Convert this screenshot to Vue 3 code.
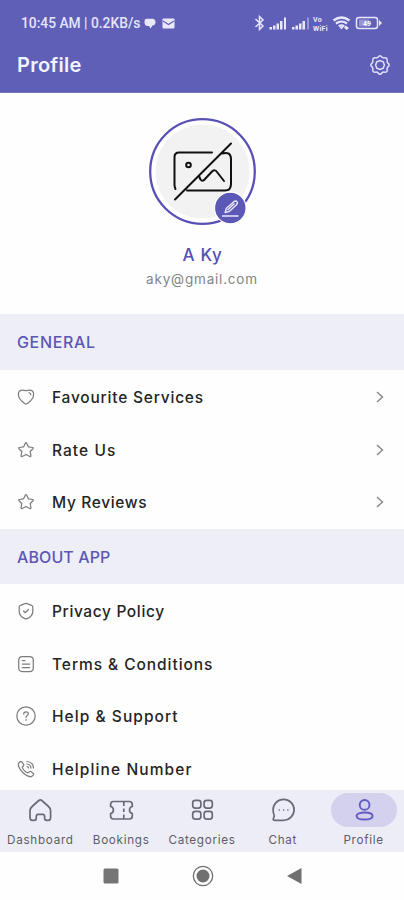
<script setup>
const general = [
  { label: 'Favourite Services', icon: 'heart', tracking: 0.79 },
  { label: 'Rate Us', icon: 'star', tracking: 1.05 },
  { label: 'My Reviews', icon: 'star', tracking: 0.65 },
]
const about = [
  { label: 'Privacy Policy', icon: 'shield', tracking: 0.63 },
  { label: 'Terms & Conditions', icon: 'doc', tracking: 0.94 },
  { label: 'Help & Support', icon: 'help', tracking: 1.05 },
  { label: 'Helpline Number', icon: 'phone', tracking: 1.1 },
]
const sections = [
  { title: 'GENERAL', rows: general, arrows: true },
  { title: 'ABOUT APP', rows: about, arrows: false },
]
const icons = {
  heart: 'M6.500 3C8 3 9 3.300 10 3.800C11 3.300 12 3 13.500 3C16.500 3 17.600 5 17.600 7.400C17.600 11.300 13.700 14.800 11 16.700Q10 17.400 9 16.700C6.300 14.800 2.400 11.300 2.400 7.400C2.400 5 3.500 3 6.500 3ZM13 5.800Q14.700 5.900 14.800 7.600',
  star: 'M9.300 3.200Q10 2.100 10.700 3.200L12.500 6.900L16.700 7.500Q17.800 7.800 17 8.700L14.200 11.500L14.900 15.700Q14.900 17 13.800 16.500L10 14.500L6.200 16.500Q5.100 17 5.100 15.700L5.800 11.500L3 8.700Q2.200 7.800 3.300 7.500L7.500 6.900Z',
  shield: 'M8.900 2.600Q10 2.100 11.100 2.600L15.500 4.300Q16.800 4.900 16.800 6.300V10.300C16.800 13.500 14 16.400 11.200 17.600Q10 18.100 8.800 17.600C6 16.400 3.200 13.500 3.200 10.300V6.300Q3.200 4.900 4.500 4.300ZM7.600 10L9.300 11.700L12.500 8.500',
  doc: 'M6.500 2.500H13.500Q17.300 2.500 17.300 6.300V13.700Q17.300 17.500 13.500 17.500H6.500Q2.700 17.500 2.700 13.700V6.300Q2.700 2.500 6.500 2.500ZM6.300 6.500H9M6.300 10H13.700M6.300 13.500H13.700',
  help: 'M10 .8A9.200 9.200 0 1 1 10 19.200A9.200 9.200 0 1 1 10 .8ZM7.700 8Q7.700 5.800 10 5.800Q12.300 5.800 12.300 7.900C12.300 9.600 10 9.500 10 11.500M10 13.700V14.300',
  phone: 'M5.600 2.700Q4.900 2 4.100 2.700L2.700 4.100C1.500 6 3.500 10.200 6.500 13.300S13.800 18.400 15.900 17.400L17.400 15.900Q18.100 15.100 17.300 14.400L14.800 12.500Q14 12 13.300 12.700L12 13.900C9.800 13.200 7 10.300 6.200 8.100L7.500 6.700Q8.100 6 7.500 5.200ZM11 5Q14.500 5.400 15 9M11 2.500Q17 3 17.500 9M11.200 7.700Q12.200 7.900 12.400 9',
}
const tabs = [
  { label: 'Dashboard', path: 'M4.300 8.500L10.500 3Q12 1.800 13.500 3L19.700 8.500Q22.300 10.800 22.300 13V20Q22.300 22.800 20 22.800H18.500Q16.300 22.800 16.300 20.800V19Q16.300 16.800 14.500 16.800H9.800Q8 16.800 8 19V20.800Q8 22.800 5.800 22.800H4.200Q1.700 22.800 1.700 20V13Q1.700 10.800 4.300 8.500Z' },
  { label: 'Bookings', path: 'M4 4H20Q23 4 23 7V9Q20.200 9.500 20.200 12.500T23 16V18.500Q23 21.500 20 21.500H4Q1.300 21.500 1.300 18.500V16Q4.100 15.500 4.100 12.500T1.300 9V7Q1.300 4 4 4ZM14.500 4.800V8.500M14.500 11V14.500M14.500 17V21' },
  { label: 'Categories', path: 'M5 2.800H8Q10.600 2.800 10.600 5.400V8Q10.600 10.600 8 10.600H5Q2.400 10.600 2.400 8V5.400Q2.400 2.800 5 2.800ZM16.400 2.800H19.400Q22 2.800 22 5.400V8Q22 10.600 19.400 10.600H16.400Q13.800 10.600 13.800 8V5.400Q13.800 2.800 16.400 2.800ZM5 13.800H8Q10.600 13.800 10.600 16.400V19Q10.600 21.600 8 21.600H5Q2.400 21.600 2.400 19V16.400Q2.400 13.800 5 13.800ZM16.400 13.800H19.400Q22 13.800 22 16.400V19Q22 21.600 19.400 21.600H16.400Q13.800 21.600 13.800 19V16.400Q13.800 13.800 16.400 13.800Z' },
  { label: 'Chat', path: 'M1.800 12.300A10.500 10.500 0 1 1 12.300 22.800H3.200Q1.300 22.500 2.200 20.600L3 18.500Q1.800 15.500 1.800 12.300ZM7.400 12.500H8.600M11.700 12.500H12.900M16 12.500H17.200' },
  { label: 'Profile', active: true, path: 'M12.300 2.500A4.900 4.900 0 1 1 12.300 12.300A4.900 4.900 0 1 1 12.300 2.500ZM12.300 15C16.300 15 20.300 16 20.300 18.500S16.300 22 12.300 22S4.300 21 4.300 18.500S8.300 15 12.300 15Z' },
]
</script>

<template>
  <main class="screen">
    <header class="top">
      <div class="status">
        <span class="clock">10:45 AM | 0.2KB/s</span>
        <svg class="bubble" width="12" height="11" viewBox="0 0 12 11"><path d="M3 .8H9Q11.500 1.300 11.500 4.300T8.500 7.500L6.500 10.500L5 8H3Q.5 7.500 .5 4T3 .8Z" /></svg>
        <svg class="mail" width="13" height="11" viewBox="0 0 13 11"><rect x=".5" y=".5" width="12" height="10" rx="1" /><path d="M1 3L6.500 6.500L12 3" class="cut" /></svg>
        <svg class="signals" width="130" height="18" viewBox="0 0 130 18">
          <path class="line" d="M1.500 5L9 12L5.500 15.500V2.500L9 6L1.500 13" />
          <path d="M15.500 13H18V15.500H15.500ZM19 11.500H21.500V15.500H19ZM22.500 9.500H25V15.500H22.500ZM26 7H28.500V15.500H26ZM30 3.500H32V15.500H30Z" />
          <path d="M38 13H40.500V15.500H38ZM41.500 11.500H44V15.500H41.500ZM45 9.500H47.500V15.500H45ZM48.500 7H51V15.500H48.500Z" />
          <path opacity=".4" d="M53 3.500H55V15.500H53Z" />
          <text x="59" y="7.500">Vo</text><text x="59" y="16.500">WiFi</text>
          <path class="wifi" d="M79.500 6.500Q87.500 .5 95.500 6.500M82 9.500Q87.500 5.500 93 9.500M84.800 12.300Q87.500 10.600 90.200 12.300" />
          <path d="M85.500 13Q87.500 12 89.500 13L87.500 15.500ZM91.500 11.500L95 14L92.500 16L90 13.500Z" />
          <rect class="battery" x="102.500" y="3.500" width="21" height="11" rx="2.500" />
          <path d="M125 6L128 9L125 12Z" /><path opacity=".4" d="M105 5.500H115V12.500H105Z" />
          <text class="charge" x="109" y="11.800">49</text>
        </svg>
      </div>
      <div class="heading">
        <h1>Profile</h1>
        <svg width="22" height="22" viewBox="0 0 24 24" class="gear"><path d="M10 3.300Q12 .5 14 3.300Q15.200 4.500 16.900 4.200Q20 3.800 19.800 7.100Q19.500 8.800 20.700 10Q23.300 12 20.700 14Q19.500 15.200 19.800 16.900Q20.200 20.200 16.900 19.800Q15.200 19.500 14 20.700Q12 23.500 10 20.700Q8.800 19.500 7.100 19.800Q3.800 20.200 4.200 16.900Q4.500 15.200 3.300 14Q.7 12 3.300 10Q4.500 8.800 4.200 7.100Q3.800 3.800 7.100 4.200Q8.800 4.500 10 3.300Z" /><path d="M12 7.200L15.500 8.500L16.800 12L15.500 15.500L12 16.800L8.500 15.500L7.200 12L8.500 8.500Z" /></svg>
      </div>
    </header>

    <section class="user">
      <div class="avatar">
        <svg width="107" height="107" viewBox="0 0 107 107" fill="none">
          <circle cx="53.500" cy="53.500" r="52.300" fill="#fff" stroke="#5750b5" stroke-width="2.300" />
          <circle cx="53.500" cy="53.500" r="47" fill="#f2f2f3" />
          <g stroke="#111" stroke-width="2" stroke-linecap="round" stroke-linejoin="round">
            <path d="M63 34.500H30Q25.500 34.500 25.500 39V67Q25.500 69 26.500 71M73 35.500Q82 33 82 41V66Q82 72.500 76 72.500H38M26 81.500L82 25.500M50 58L51.500 61.500Q53.500 64 56 61L63 53.500Q66 51 68 54L75 63" />
            <circle cx="39.500" cy="47" r="2.300" />
          </g>
        </svg>
        <svg class="edit" width="34" height="34" viewBox="0 0 34 34" fill="none"><circle cx="17.300" cy="17" r="15.800" fill="#5c58b7" stroke="#fff" stroke-width="1.200" /><path d="M12.200 21.500L13.200 17.500L20.800 10.700Q23 9.300 24 10.700Q25 12 23.300 14L16.500 20.300ZM14.500 19L21.500 12.500M9 25H25.500" stroke="#e9e8fa" stroke-width="1.400" stroke-linejoin="round" /></svg>
      </div>
      <h2>A Ky</h2>
      <p>aky@gmail.com</p>
    </section>

    <template v-for="section in sections" :key="section.title">
      <h3 :class="{ second: !section.arrows }">{{ section.title }}</h3>
      <ul>
        <li v-for="row in section.rows" :key="row.label">
          <svg class="icon" width="20" height="20" viewBox="0 0 20 20"><path :d="icons[row.icon]" /></svg>
          <span :style="{ letterSpacing: row.tracking + 'px' }">{{ row.label }}</span>
          <svg v-if="section.arrows" class="arrow" width="10" height="14" viewBox="0 0 10 14"><path d="M2 2L7.500 7L2 12" /></svg>
        </li>
      </ul>
    </template>

    <nav class="tabs">
      <div v-for="tab in tabs" :key="tab.label" class="tab" :class="{ active: tab.active }">
        <span class="pill"><svg width="26" height="26" viewBox="-1.300 -.5 26 26"><path :d="tab.path" /></svg></span>
        <span class="name">{{ tab.label }}</span>
      </div>
    </nav>
    <footer>
      <svg width="16" height="16" viewBox="0 0 16 16"><rect x=".5" y=".5" width="15" height="15" rx="1.500" fill="#757575" /></svg>
      <svg width="22" height="22" viewBox="0 0 22 22"><circle cx="11" cy="11" r="9.700" fill="none" stroke="#707070" stroke-width="1.300" /><circle cx="11" cy="11" r="6.500" fill="#707070" /></svg>
      <svg width="16" height="18" viewBox="0 0 16 18"><path d="M15.500 1V17L1 9Z" fill="#707070" /></svg>
    </footer>
  </main>
</template>

<style>
body { margin: 0; background: #fff; }
</style>
<style scoped>
.screen { width: 404px; height: 900px; display: flex; flex-direction: column; overflow: hidden; background: #fefefe; font-family: Inter, "Noto Sans", sans-serif; }
h1, h2, h3, p, ul { margin: 0; padding: 0; }
svg { display: block; flex: none; }
.top { height: 93px; flex: none; box-sizing: border-box; border-bottom: 1px solid #7773c1; background: #605fb8; color: #f3f2ff; }
.status { display: flex; align-items: center; height: 36px; padding: 10px 20px 0 21px; box-sizing: border-box; fill: #e9e8fb; }
.clock { width: 119px; font: 500 13.8px/26px Roboto, sans-serif; color: #e5e4f8; white-space: nowrap; }
.bubble { margin-left: 4px; }
.mail { margin-left: 6px; }
.cut { fill: none; stroke: #605fb8; stroke-width: 1.2; }
.signals { margin-left: auto; }
.line, .wifi, .battery { fill: none; stroke: #e9e8fb; stroke-width: 1.5; }
.wifi { stroke-width: 2.2; }
.signals text { font: 700 7px Roboto, sans-serif; letter-spacing: .3px; }
.signals .charge { fill: #fff; letter-spacing: 0; }
.heading { display: flex; align-items: center; justify-content: space-between; height: 57px; padding: 0 13px 0 17px; }
h1 { font-size: 20px; line-height: 28px; font-weight: 600; letter-spacing: .25px; }
.gear { fill: none; stroke: #e4e3fb; stroke-width: 1.6; }
.user { display: flex; flex-direction: column; align-items: center; height: 221px; flex: none; padding-top: 25px; box-sizing: border-box; }
.avatar { position: relative; width: 107px; height: 107px; }
.edit { position: absolute; left: 64px; top: 73px; }
h2 { margin-top: 18px; padding-left: 1px; color: #5550b4; font-size: 17px; line-height: 24px; font-weight: 500; letter-spacing: .6px; }
p { margin-top: 2px; color: #858585; font-size: 13.5px; line-height: 20px; letter-spacing: .8px; }
h3 { height: 56px; flex: none; padding: 1px 17px 0; box-sizing: border-box; background: #eeeef7; color: #5b57b6; font-size: 16px; line-height: 55px; font-weight: 500; letter-spacing: .65px; }
h3.second { height: 55px; letter-spacing: .1px; }
ul { list-style: none; flex: none; padding: .5px 0; }
li { height: 52.700px; display: flex; align-items: center; padding: 0 19px 0 16px; }
li span { margin-left: 16px; padding-top: 1px; flex: 1; color: #242424; font-size: 15.5px; font-weight: 500; white-space: nowrap; }
.icon { fill: none; stroke: #7d7d7d; stroke-width: 1.25; stroke-linecap: round; stroke-linejoin: round; }
.arrow { fill: none; stroke: #858585; stroke-width: 1.4; }
.tabs { display: grid; grid-template-columns: repeat(5, 1fr); height: 62px; flex: none; margin-top: -6px; padding-top: 3px; box-sizing: border-box; background: #ededf8; position: relative; }
.tab { display: flex; flex-direction: column; align-items: center; }
.pill { width: 66px; height: 34px; border-radius: 17px; display: flex; align-items: center; justify-content: center; }
.pill svg { fill: none; stroke: #686b76; stroke-width: 1.7; stroke-linejoin: round; }
.active .pill { background: #d3d1ed; }
.active .pill svg { stroke: #625bc0; stroke-width: 1.9; }
.name { margin-top: 5px; color: #5d5d66; font-size: 11.7px; line-height: 16px; letter-spacing: .7px; }
footer { height: 49px; display: flex; align-items: center; padding-left: 103px; gap: 72.5px; }
</style>
